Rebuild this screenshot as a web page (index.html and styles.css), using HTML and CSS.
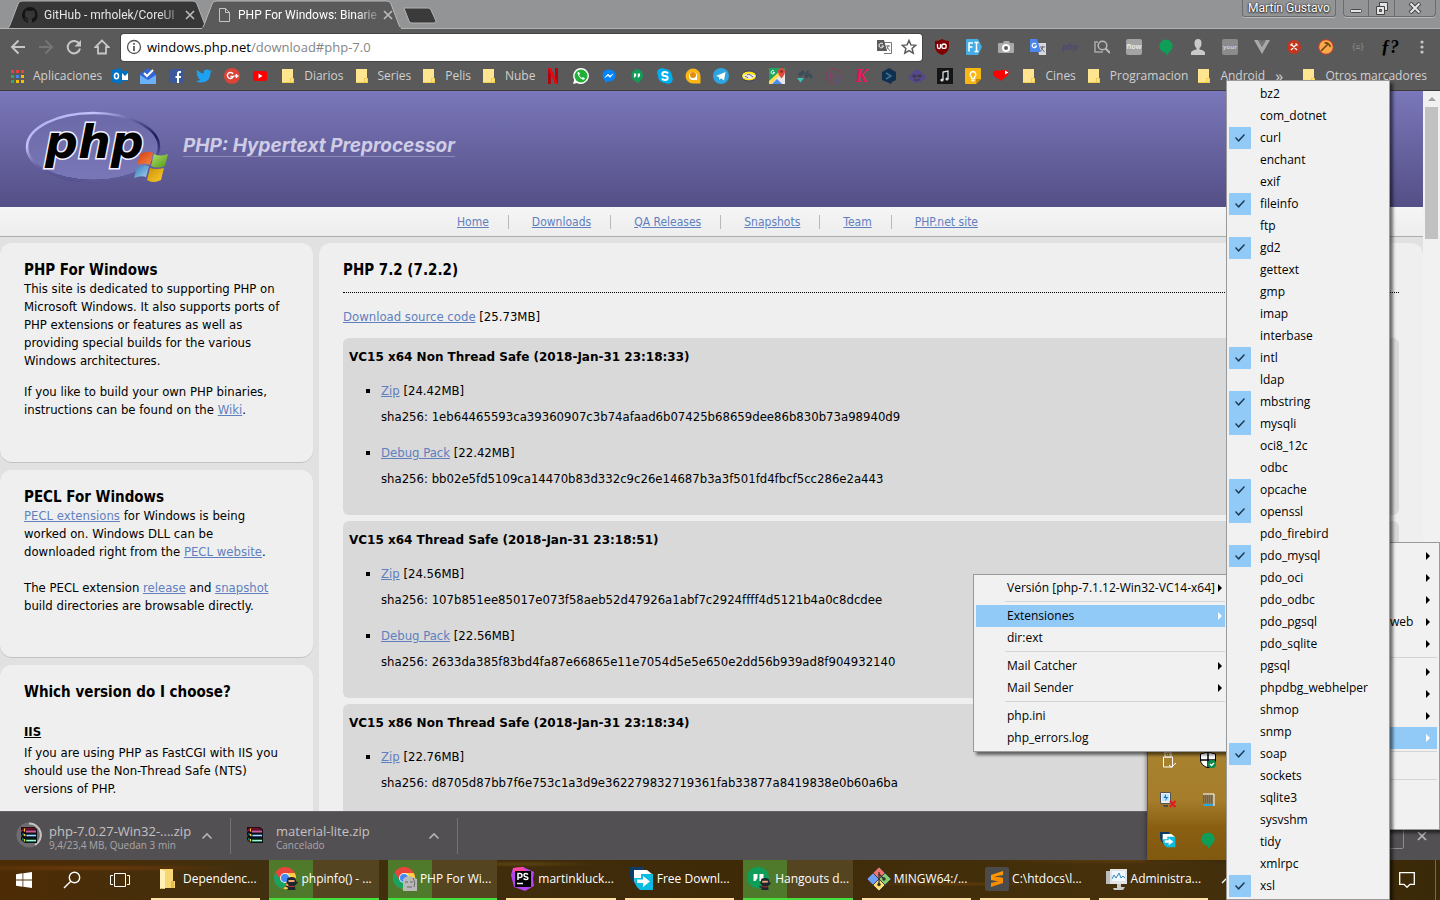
FILE: index.html
```html
<!DOCTYPE html>
<html lang="es">
<head>
<meta charset="utf-8">
<title>PHP For Windows: Binaries and sources Releases</title>
<link rel="stylesheet" href="styles.css">
</head>
<body>
<svg class="defs" aria-hidden="true">
  <symbol id="folder" viewBox="0 0 16 16"><path d="M2 1h11v9h1v5H2z" fill="#ffe58f"/><path d="M10 14v-4h4v5H2v-1z" fill="#f3cd4e"/><path d="M11 11h2v2.500h-2z" fill="#ffe58f"/></symbol>
  <symbol id="close" viewBox="0 0 10 10"><path d="M1 1l8 8M9 1L1 9" stroke="#b9b9b9" stroke-width="1.700" fill="none"/></symbol>
  <symbol id="chev" viewBox="0 0 12 8"><path d="M1.500 6.500L6 2l4.500 4.500" stroke="#b4b2b4" stroke-width="1.700" fill="none"/></symbol>
  <symbol id="rar" viewBox="0 0 16 16"><path d="M0 0h13l3 2.500V16H4l-4-3v-3l1-1-1-1V5l1-1-1-1z" fill="#101010"/><path d="M1 .700h11l3 2H4.500z" fill="#7a0b2c"/><path d="M1 1.500l3.500 2v1.800L1 3.800z" fill="#a01040"/><path d="M5 3.500h10v2H5z" fill="#d05a9c"/><path d="M1.500 6l3.500 1.500v2L1.500 8z" fill="#1b78d0"/><path d="M5.500 7.500H15v2H5.500z" fill="#2d8ce0"/><path d="M5.500 8h9.500v.8H5.500z" fill="#d7ecff"/><path d="M1 10.800l3.500 2v2L1 13z" fill="#0c7a50"/><path d="M5 12.500h10v2.300H5z" fill="#18a070"/><path d="M5.500 13h9.500v.8H5.500z" fill="#e3fff2"/><path d="M3.500 1.500v3M3.500 7v2M3.500 12v2.500" stroke="#f1d02e"/></symbol>
  <symbol id="chrome" viewBox="0 0 24 24"><circle cx="11" cy="11" r="11" fill="#e8453c"/><path d="M1.500 5.500A11 11 0 0 0 9.500 22L14 13 6.500 13z" fill="#1aa260"/><path d="M11 6h9.800A11 11 0 0 1 9.500 22l5-8z" fill="#ffcd40"/><circle cx="11" cy="11" r="5" fill="#f1f1f1"/><circle cx="11" cy="11" r="4" fill="#4587f4"/></symbol>
  <symbol id="ninja" viewBox="0 0 12 14"><path d="M2 1q4-2 8 0l1 5-2 2 1 5H2l1-5-2-2z" fill="#20242c"/><path d="M3 3h6v2H3z" fill="#f0a878"/><path d="M3 9h6v1H3z" fill="#b33"/><path d="M9 8l3-3M0 9l3 1" stroke="#20242c" stroke-width="1.500"/></symbol>
  <symbol id="fdm" viewBox="0 0 24 24"><path d="M0 0h14v22q-14-5-14-14z" fill="#0d3b66"/><path d="M4 3h13l5 4v12l-8 4Q4 19 4 12z" fill="#fff"/><path d="M4 11h7V7h12v16H10q-4-3-5-7z" fill="#0bbce0"/><path d="M7 12.500h6V9l7 5.500-7 5.500v-4H7z" fill="#fff"/></symbol>
  <symbol id="drop" viewBox="0 0 16 18"><circle cx="8" cy="8" r="7.500" fill="#0f9d58"/><path d="M8 13h5l-4 5H8z" fill="#0f9d58"/></symbol>
</svg>

<div class="browser">
  <header class="chrome">
    <div class="tabs">
      <div class="tab">
        <svg class="tab-shape" viewBox="0 0 202 29" preserveAspectRatio="none"><path d="M0 28.500Q2 28 3 25L11 4Q12 1 15 1h171q3 0 4 3l8 21q1 3 3 3.500z" fill="#373737" stroke="#b3b3b3" stroke-width="1"/></svg>
        <svg class="fav" viewBox="0 0 16 16"><path fill="#151515" d="M8 0a8 8 0 0 0-2.500 15.600c.4 0 .5-.2.5-.4v-1.500c-2.200.5-2.700-1-2.700-1-.4-.9-.9-1.200-.9-1.200-.7-.5.1-.5.1-.5.800.1 1.200.8 1.200.8.7 1.300 1.900.9 2.300.7.100-.5.300-.9.500-1.100-1.800-.2-3.600-.9-3.600-4 0-.9.300-1.600.8-2.100-.1-.2-.4-1 .1-2.100 0 0 .7-.2 2.200.8a7.500 7.500 0 0 1 4 0c1.500-1 2.200-.8 2.200-.8.400 1.100.2 1.900.1 2.100.5.6.8 1.300.8 2.100 0 3.100-1.900 3.700-3.700 3.900.3.300.6.8.6 1.500v2.200c0 .2.100.5.500.4A8 8 0 0 0 8 0"/></svg>
        <span class="tab-title">GitHub - mrholek/CoreUI</span>
        <button class="bare" aria-label="Cerrar"><svg width="10" height="10"><use href="#close"/></svg></button>
      </div>
      <div class="tab active">
        <svg class="tab-shape" viewBox="0 0 202 29" preserveAspectRatio="none"><path d="M0 29Q2 28 3 25L11 4Q12 1 15 1h171q3 0 4 3l8 21q1 3 3 4z" fill="#5a5a5a" stroke="#b9b9b9" stroke-width="1"/><path d="M1 28.500h199" stroke="#5a5a5a" stroke-width="2"/></svg>
        <svg class="fav" viewBox="0 0 16 16"><path d="M3.500 1.500h6l4 4v9h-10zM9.500 1.500v4h4" fill="none" stroke="#c4c4c4"/></svg>
        <span class="tab-title">PHP For Windows: Binarie</span>
        <button class="bare" aria-label="Cerrar"><svg width="10" height="10"><use href="#close"/></svg></button>
      </div>
      <button class="bare newtab" aria-label="Nueva pestaña"><svg width="34" height="17" viewBox="0 0 34 17"><path d="M1 1h24q2 0 3 2l5 11q0 2-2 2H9q-2 0-3-2z" fill="#3a3a3a" stroke="#b3b3b3"/></svg></button>
      <div class="win">
        <button class="win-user">Martín Gustavo</button>
        <div class="win-btns">
          <button aria-label="Minimizar"><svg width="14" height="12" viewBox="0 0 14 12"><rect x="1.500" y="7.500" width="11" height="3" rx="1" fill="#e3e3e3" stroke="#4a4a4a"/></svg></button>
          <button aria-label="Restaurar"><svg width="14" height="13" viewBox="0 0 14 13"><path d="M4.500.5h8v8h-8z" fill="#e3e3e3" stroke="#444"/><path d="M1.500 4.500h8v8h-8z" fill="#e3e3e3" stroke="#444"/><path d="M4.500 7.500h2v2h-2z" fill="#929496" stroke="#444"/></svg></button>
          <button aria-label="Cerrar"><svg width="14" height="12" viewBox="0 0 14 12"><path d="M2 1l10 10M12 1L2 11" stroke="#444" stroke-width="4"/><path d="M2.500 1.500l9 9M11.500 1.500l-9 9" stroke="#e9e9e9" stroke-width="2"/></svg></button>
        </div>
      </div>
    </div>

    <div class="toolbar">
      <div class="navbtns">
        <button class="bare" aria-label="Atrás"><svg width="16" height="16" viewBox="0 0 16 16"><path d="M15 8H2.500M8.500 1.500L2 8l6.500 6.500" fill="none" stroke="#c6c6c6" stroke-width="2"/></svg></button>
        <button class="bare" aria-label="Adelante"><svg width="16" height="16" viewBox="0 0 16 16"><path d="M1 8h12.500M7.500 1.500L14 8l-6.500 6.500" fill="none" stroke="#757575" stroke-width="2"/></svg></button>
        <button class="bare" aria-label="Recargar"><svg width="16" height="16" viewBox="0 0 16 16"><path d="M13.300 5A6.200 6.200 0 1 0 14 9.500" fill="none" stroke="#c6c6c6" stroke-width="2"/><path d="M15 1v6.500H8.500z" fill="#c6c6c6"/></svg></button>
        <button class="bare" aria-label="Inicio"><svg width="16" height="16" viewBox="0 0 16 16"><path d="M8 1.500L1.500 8H4v6.500h8V8h2.500z" fill="none" stroke="#c6c6c6" stroke-width="1.800"/></svg></button>
      </div>
      <div class="omnibox">
        <svg width="16" height="16" viewBox="0 0 16 16"><circle cx="8" cy="8" r="6.500" fill="none" stroke="#555" stroke-width="1.300"/><path d="M7.200 7h1.600v5H7.200zM7.200 4h1.600v1.700H7.200z" fill="#444"/></svg>
        <a class="url" href="#php-7.0">windows.php.net<span>/download#php-7.0</span></a>
        <svg width="16" height="16" viewBox="0 0 16 16"><path d="M6 3.500h9.500v11H8" fill="#fff" stroke="#777"/><path d="M1 1h7l3 11H1z" fill="#5b5b5b"/><path d="M7 5A2.300 2.300 0 1 0 7.500 7H5.500" stroke="#fff" fill="none"/><path d="M10 7h4M12 6v1q0 3-2 4M11 8l3 4" stroke="#777" fill="none"/></svg>
        <svg width="16" height="16" viewBox="0 0 16 16"><path d="M8 1.500l1.900 4.400 4.800.4-3.600 3.100 1.100 4.700L8 11.600l-4.200 2.500 1.100-4.700L1.300 6.300l4.800-.4z" fill="none" stroke="#5a5a5a" stroke-width="1.500"/></svg>
      </div>
      <div class="exts">
        <svg viewBox="0 0 16 16"><path d="M8 0q3 2 7 2v6q0 5-7 8-7-3-7-8V2q4 0 7-2" fill="#800000"/><path d="M3.500 5v3q0 1.500 1.500 1.500T6.500 8V5" stroke="#fff" stroke-width="1.300" fill="none"/><circle cx="10" cy="7.200" r="2.200" stroke="#fff" stroke-width="1.300" fill="none"/></svg>
        <svg viewBox="0 0 16 16"><path d="M1 0h11l4 8-4 8H1q-1 0-1-1V1q0-1 1-1" fill="#45aee6"/><path d="M3 12.500V4h4M3 8h3.500M8.500 3.500h4M10.500 3.500v9M8.500 12.500h4" stroke="#fff" stroke-width="1.500" fill="none"/></svg>
        <svg viewBox="0 0 16 16"><path d="M1 4h4l1-2h5l1 2h3q1 0 1 1v8q0 1-1 1H1q-1 0-1-1V5q0-1 1-1" fill="#a9a9a9"/><circle cx="8" cy="9" r="3" fill="#5a5a5a" stroke="#fff" stroke-width="2"/></svg>
        <svg viewBox="0 0 16 16"><path d="M7 4h9v12H9z" fill="#d8d8d8"/><path d="M0 0h7l4 13H1q-1 0-1-1z" fill="#4a86ee"/><path d="M6 5A2.200 2.200 0 1 0 6.500 7H4.500" stroke="#fff" stroke-width="1.200" fill="none"/><path d="M10 8h5M12.500 7v1q0 3-2 4M11 9l3.500 4" stroke="#667" fill="none"/></svg>
        <span class="x-php">php</span>
        <svg viewBox="0 0 16 16"><path d="M4 3H1v10h8" fill="none" stroke="#a9a9a9" stroke-width="1.500"/><circle cx="8.500" cy="6.500" r="4.300" fill="none" stroke="#b9b9b9" stroke-width="1.500"/><path d="M11.500 9.500L16 14" stroke="#b9b9b9" stroke-width="2"/></svg>
        <span class="x-tag">flow</span>
        <svg viewBox="0 0 16 18"><use href="#drop"/></svg>
        <svg viewBox="0 0 16 16"><path d="M4.500 4q0-4 3.500-4t3.500 4q0 4-2 5v1.500q5 1 5.500 3V16H1v-2.500q.5-2 5.500-3V9q-2-1-2-5" fill="#cacaca"/></svg>
        <span class="x-tag x-dim">your</span>
        <svg viewBox="0 0 16 16"><path d="M0 1h4l4 7 4-7h4L8 15z" fill="#a9a9a9"/><path d="M4 1h3l1 2 1-2h3L8 8z" fill="#777"/></svg>
        <svg viewBox="0 0 16 16"><circle cx="8" cy="8" r="7" fill="#c2361f"/><path d="M5 11l6-6M11 11L5 5M4.500 6.500l2-2M9.500 4.500l2 2" stroke="#fff" stroke-width="1.200"/></svg>
        <svg viewBox="0 0 16 16"><circle cx="8" cy="8" r="7.300" fill="#f9a94a" stroke="#c9352b"/><path d="M3 12l7-7M6.500 4q4-1 6 4" stroke="#704214" stroke-width="1.600" fill="none"/></svg>
        <span class="x-brace">{≡}</span>
        <span class="x-f">ƒ?</span>
        <button class="bare" aria-label="Menú"><svg viewBox="0 0 16 16"><circle cx="8" cy="3" r="1.600" fill="#c6c6c6"/><circle cx="8" cy="8" r="1.600" fill="#c6c6c6"/><circle cx="8" cy="13" r="1.600" fill="#c6c6c6"/></svg></button>
      </div>
    </div>

    <nav class="bookmarks">
      <a class="named" href="#"><svg viewBox="0 0 16 16"><path d="M2 2h3v3H2zM7 2h3v3H7z" fill="#ea4335"/><path d="M12 2h3v3h-3z" fill="#ea4335"/><path d="M2 7h3v3H2z" fill="#34a853"/><path d="M7 7h3v3H7z" fill="#4285f4"/><path d="M12 7h3v3h-3zM7 12h3v3H7zM12 12h3v3h-3z" fill="#fbbc05"/><path d="M2 12h3v3H2z" fill="#34a853"/></svg>Aplicaciones</a>
      <a href="#" aria-label="Outlook"><svg viewBox="0 0 16 16"><path d="M0 2l9-2v16l-9-2z" fill="#0072c6"/><path d="M9 3h7v10H9z" fill="#0072c6"/><path d="M10 5l3 3 3-3v7h-6z" fill="#fff"/><ellipse cx="4.500" cy="8" rx="2" ry="2.700" fill="none" stroke="#fff" stroke-width="1.600"/></svg></a>
      <a href="#" aria-label="Inbox"><svg viewBox="0 0 16 16"><path d="M0 6l8-6 8 6v9H0z" fill="#3367d6"/><path d="M0 7l8 5 8-5v9H0z" fill="#6ab1f7"/><path d="M4 5l3 3 6-6" stroke="#fff" stroke-width="2" fill="none"/></svg></a>
      <a href="#" aria-label="Facebook"><svg viewBox="0 0 16 16"><path d="M1 1h14v14H1z" fill="#3b5998"/><path d="M13 4h-1.500q-1.500 0-1.500 1.500V8M7.500 9H13M10 8v7" stroke="#fff" stroke-width="2" fill="none"/></svg></a>
      <a href="#" aria-label="Twitter"><svg viewBox="0 0 16 16"><path d="M16 3.500l-1.600 1.600Q14.500 14 5.500 14.500 2 14.500 0 13q3 0 4.500-1.500-2-.3-3-2.200h1.400Q.6 8.500.5 6l1.400.4Q-.2 4.500 1.200 2q3 3.300 6.700 3.500-.5-4 3-4 1.500 0 2.500 1l2-.8-1.300 1.900z" fill="#1da1f2"/></svg></a>
      <a href="#" aria-label="Google+"><svg viewBox="0 0 16 16"><circle cx="8" cy="8" r="8" fill="#db4437"/><path d="M9 6A3 3 0 1 0 9.200 8.500H6.500M10.500 8h4M12.500 6v4" stroke="#fff" stroke-width="1.400" fill="none"/></svg></a>
      <a href="#" aria-label="YouTube"><svg viewBox="0 0 16 16"><rect x="1" y="3" width="14" height="10" rx="2.500" fill="#f00"/><path d="M6.500 5.500v5l4-2.500z" fill="#fff"/></svg></a>
      <a class="named" href="#"><svg><use href="#folder"/></svg>Diarios</a>
      <a class="named" href="#"><svg><use href="#folder"/></svg>Series</a>
      <a class="named" href="#"><svg><use href="#folder"/></svg>Pelis</a>
      <a class="named" href="#"><svg><use href="#folder"/></svg>Nube</a>
      <a href="#" aria-label="Netflix"><svg viewBox="0 0 16 16"><path d="M3 0h3v16H3zM10 0h3v16h-3z" fill="#b1060f"/><path d="M3 0h3l7 16h-3z" fill="#e50914"/></svg></a>
      <a href="#" aria-label="WhatsApp"><svg viewBox="0 0 16 16"><path d="M8 0a8 8 0 1 1-4 15l-4 1 1.200-4A8 8 0 0 1 8 0" fill="#fff"/><circle cx="8" cy="8" r="6.500" fill="#20b038"/><path d="M5 4q-1 1 0 3 1.500 3 4.500 4.500 2 .5 2.500-1l-2-1.500-1 1Q7 9 6 7l1-1-1-2z" fill="#fff"/></svg></a>
      <a href="#" aria-label="Messenger"><svg viewBox="0 0 16 16"><path d="M8 1.500q6.500 0 6.500 6t-8 6L4 15v-2.500Q1.500 11 1.500 7.500q0-6 6.500-6" fill="#0084ff"/><path d="M4 9.500L7 6l2 2 3-2-3 3.500-2-2z" fill="#fff" stroke="#fff" stroke-width=".6"/></svg></a>
      <a href="#" aria-label="Hangouts"><svg viewBox="0 0 16 16"><path d="M8 1a6.500 6.500 0 0 1 6 7q-.5 4-6 8v-2.300A6.400 6.400 0 0 1 8 1" fill="#0f9d58"/><path d="M5 5.500h2.200v2.300L6 9.500H5zM8.800 5.500H11v2.300L9.800 9.500h-1z" fill="#fff"/></svg></a>
      <a href="#" aria-label="Skype"><svg viewBox="0 0 16 16"><circle cx="5" cy="5" r="4.800" fill="#00aff0"/><circle cx="11" cy="11" r="4.800" fill="#00aff0"/><circle cx="8" cy="8" r="7" fill="#00aff0"/><path d="M11 5.500Q10 4 8 4 5.300 4 5.300 6T8 8t2.700 2T8 12Q6 12 5 10.500" stroke="#fff" stroke-width="2" fill="none"/></svg></a>
      <a href="#" aria-label="Allo"><svg viewBox="0 0 16 16"><path d="M8 .5A7.500 7.500 0 1 0 8 15.500h7.500V8A7.500 7.500 0 0 0 8 .5" fill="#fbb515"/><path d="M8 4a4 4 0 1 0 0 8h4V8a4 4 0 0 0-4-4" fill="#fff"/><circle cx="8" cy="7" r="3" fill="#e58c0b"/></svg></a>
      <a href="#" aria-label="Telegram"><svg viewBox="0 0 16 16"><circle cx="8" cy="8" r="8" fill="#2ca5e0"/><path d="M3 8l9.500-4L11 12.500 8 10.300 6.500 12 6 9z" fill="#fff"/></svg></a>
      <a href="#" aria-label="Mercado Libre"><svg viewBox="0 0 16 16"><ellipse cx="8" cy="8" rx="7.500" ry="5" fill="#ffe600" stroke="#36357a"/><path d="M1.500 7q3 0 6.500-2 3 2 6.500 2-1 4-6.500 4T1.500 7" fill="#e9e9e9"/><path d="M6 7l2-1 4 3M4 8l3 2" stroke="#666" fill="none"/></svg></a>
      <a href="#" aria-label="Maps"><svg viewBox="0 0 16 16"><path d="M0 0h16v16H0z" fill="#1da462"/><path d="M0 16L16 2v14z" fill="#e8e8e8"/><path d="M3 16l5-5 5 5z" fill="#4c8bf5"/><path d="M0 13L11 3l2 2L2 16H0z" fill="#ffde48"/><path d="M12.500 0a3.500 3.500 0 0 1 3.500 3.500q0 3-3.500 7-3.500-4-3.500-7A3.500 3.500 0 0 1 12.500 0" fill="#dd4b3e"/><circle cx="12.500" cy="3.500" r="1.300" fill="#822"/><path d="M5 3A1.700 1.700 0 1 0 5.500 4.500H4" stroke="#fff" fill="none"/></svg></a>
      <a href="#" aria-label="HN"><svg viewBox="0 0 16 16"><path d="M1 6l5-4 2 3-5 4zM7 8l3-6 2 1-1 3 2-1 3 4-2 2-2-3-3 3z" fill="#3b4b58"/><path d="M0 10h7l-3.500 4.500z" fill="#35c4b5"/></svg></a>
      <a href="#" aria-label="Player"><svg viewBox="0 0 16 16"><circle cx="8" cy="8" r="7.300" fill="none" stroke="#923859"/><path d="M5.500 5v6l5.500-3z" fill="none" stroke="#84406f"/><path d="M8 15.300A7.300 7.300 0 0 0 15.300 8" stroke="#5b50a0" fill="none"/></svg></a>
      <a href="#" class="b-k">K</a>
      <a href="#" aria-label="Cubo"><svg viewBox="0 0 16 16"><path d="M8 0l7 4v8l-4 2-1 2-2-1-7-3V4z" fill="#11304f"/><path d="M5 5l5 3-5 3" fill="none" stroke="#3b7190" stroke-width="1.500"/></svg></a>
      <a href="#" aria-label="Robot"><svg viewBox="0 0 16 16"><circle cx="8" cy="8.500" r="6.500" fill="#57478c"/><path d="M0 7h2v5H0zM14 7h2v5h-2z" fill="#57478c"/><path d="M4 7h3v2H4zM9 7h3v2H9zM5 11.500q3 2 6 0" fill="#3d3d4a" stroke="#3d3d4a"/></svg></a>
      <a href="#" aria-label="Música"><svg viewBox="0 0 16 16"><path d="M0 0h16v16H0z" fill="#151515"/><path d="M6 12V4l5-1v8" fill="none" stroke="#d4dde4" stroke-width="1.300"/><circle cx="5" cy="12" r="1.600" fill="#d4dde4"/><circle cx="10" cy="11" r="1.600" fill="#d4dde4"/></svg></a>
      <a href="#" aria-label="Keep"><svg viewBox="0 0 16 16"><path d="M1 0h14q1 0 1 1v10l-5 5H1q-1 0-1-1V1q0-1 1-1" fill="#f9b713"/><path d="M11 16v-5h5z" fill="#c98a00"/><path d="M8 3.500a3 3 0 0 1 1.500 5.500v1.500h-3V9A3 3 0 0 1 8 3.500zM6.500 12.500h3" fill="none" stroke="#fff" stroke-width="1.300"/></svg></a>
      <a href="#" aria-label="Favoritos"><svg viewBox="0 0 16 16"><path d="M0 4q4-3 7-1 5-3 9 1-1 4-3 5-3 1-5 4-3-3-6-4-2-2-2-5" fill="#f00"/><path d="M12 2.500v4l3.500-2z" fill="#fff"/></svg></a>
      <a class="named" href="#"><svg><use href="#folder"/></svg>Cines</a>
      <a class="named long" href="#"><svg><use href="#folder"/></svg>Programacion</a>
      <a class="named" href="#"><svg><use href="#folder"/></svg>Android</a>
      <span class="more">»</span>
      <a href="#" class="others"><svg><use href="#folder"/></svg>Otros marcadores</a>
    </nav>
  </header>

  <div class="viewport">
    <div class="site">
      <div class="site-head">
        <svg class="logo" viewBox="0 0 144 76" width="144" height="76">
          <defs>
            <linearGradient id="ring" x1="0" y1="0" x2="1" y2="1"><stop offset="0" stop-color="#a5a3e4"/><stop offset=".25" stop-color="#c5c3fb"/><stop offset=".42" stop-color="#6f6cb0"/><stop offset=".66" stop-color="#1c1a5c"/><stop offset=".85" stop-color="#5b579a"/><stop offset="1" stop-color="#6b67aa"/></linearGradient>
            <linearGradient id="ring-fade" x1="0" y1="0" x2="0" y2="1"><stop offset=".5" stop-color="#6f6cae" stop-opacity="0"/><stop offset="1" stop-color="#5d5997"/></linearGradient>
            <linearGradient id="disc" x1="0" y1="0" x2="0" y2="1"><stop offset="0" stop-color="#6c69a8"/><stop offset="1" stop-color="#7a77b8"/></linearGradient>
            <linearGradient id="fr" x1="0" y1="0" x2="1" y2="1"><stop offset="0" stop-color="#d23a12"/><stop offset="1" stop-color="#f58a42"/></linearGradient>
            <linearGradient id="fg" x1="0" y1="0" x2="1" y2="1"><stop offset="0" stop-color="#b5de6a"/><stop offset="1" stop-color="#4f9a14"/></linearGradient>
            <linearGradient id="fb" x1="0" y1="0" x2="1" y2="1"><stop offset="0" stop-color="#2f78b8"/><stop offset="1" stop-color="#a6d2f0"/></linearGradient>
            <linearGradient id="fy" x1="0" y1="0" x2="1" y2="1"><stop offset="0" stop-color="#c89008"/><stop offset="1" stop-color="#ffce2a"/></linearGradient>
          </defs>
          <ellipse cx="68" cy="36" rx="66" ry="34" fill="url(#disc)" stroke="url(#ring)" stroke-width="2.500"/>
          <ellipse cx="68" cy="36" rx="66" ry="34" fill="none" stroke="url(#ring-fade)" stroke-width="2.500"/>
          <text class="logo-text" x="20" y="47">php</text>
          <path d="M115 43q8-4 13-1l-3 12q-6-3-13 0z" fill="url(#fr)"/><path d="M129 43q6 3 14 0l-3 12q-8 3-14 0z" fill="url(#fg)"/><path d="M112 56q7-3 12-1l-3 11q-5-2-12 1z" fill="url(#fb)"/><path d="M125 57q6 2 14 0l-3 12q-8 4-14 0z" fill="url(#fy)"/>
        </svg>
        <a class="site-title" href="#">PHP: Hypertext Preprocessor</a>
      </div>
      <nav class="site-nav">
        <a href="#">Home</a><a href="#">Downloads</a><a href="#">QA Releases</a><a href="#">Snapshots</a><a href="#">Team</a><a href="#">PHP.net site</a>
      </nav>
      <div class="cols">
        <aside>
          <section class="card">
            <h2>PHP For Windows</h2>
            <p>This site is dedicated to supporting PHP on<br>Microsoft Windows. It also supports ports of<br>PHP extensions or features as well as<br>providing special builds for the various<br>Windows architectures.</p>
            <p>If you like to build your own PHP binaries,<br>instructions can be found on the <a href="#">Wiki</a>.</p>
          </section>
          <section class="card">
            <h2>PECL For Windows</h2>
            <p><a href="#">PECL extensions</a> for Windows is being<br>worked on. Windows DLL can be<br>downloaded right from the <a href="#">PECL website</a>.</p>
            <p class="far">The PECL extension <a href="#">release</a> and <a href="#">snapshot</a><br>build directories are browsable directly.</p>
          </section>
          <section class="card">
            <h2>Which version do I choose?</h2>
            <h3>IIS</h3>
            <p>If you are using PHP as FastCGI with IIS you<br>should use the Non-Thread Safe (NTS)<br>versions of PHP.</p>
          </section>
        </aside>
        <main class="card">
          <h2>PHP 7.2 (7.2.2)</h2>
          <p class="source"><a href="#">Download source code</a> [25.73MB]</p>
          <section class="build">
            <h4>VC15 x64 Non Thread Safe (2018-Jan-31 23:18:33)</h4>
            <ul>
              <li><a href="#">Zip</a> [24.42MB]<span>sha256: 1eb64465593ca39360907c3b74afaad6b07425b68659dee86b830b73a98940d9</span></li>
              <li><a href="#">Debug Pack</a> [22.42MB]<span>sha256: bb02e5fd5109ca14470b83d332c9c26e14687b3a3f501fd4fbcf5cc286e2a443</span></li>
            </ul>
          </section>
          <section class="build">
            <h4>VC15 x64 Thread Safe (2018-Jan-31 23:18:51)</h4>
            <ul>
              <li><a href="#">Zip</a> [24.56MB]<span>sha256: 107b851ee85017e073f58aeb52d47926a1abf7c2924ffff4d5121b4a0c8dcdee</span></li>
              <li><a href="#">Debug Pack</a> [22.56MB]<span>sha256: 2633da385f83bd4fa87e66865e11e7054d5e5e650e2dd56b939ad8f904932140</span></li>
            </ul>
          </section>
          <section class="build">
            <h4>VC15 x86 Non Thread Safe (2018-Jan-31 23:18:34)</h4>
            <ul>
              <li><a href="#">Zip</a> [22.76MB]<span>sha256: d8705d87bb7f6e753c1a3d9e362279832719361fab33877a8419838e0b60a6ba</span></li>
            </ul>
          </section>
        </main>
      </div>
    </div>
    <div class="scroll"><i class="scroll-up"></i><i class="thumb"></i></div>
  </div>

  <footer class="shelf">
    <div class="dl">
      <div class="dl-icon"><svg class="dl-ring" viewBox="0 0 26 26"><circle cx="13" cy="13" r="12.500" fill="#6f6c6f"/><path d="M13 1.500A11.500 11.500 0 0 1 19 23" fill="none" stroke="#c4c2c4" stroke-width="2"/></svg><svg class="rar"><use href="#rar"/></svg></div>
      <div class="dl-text"><b>php-7.0.27-Win32-....zip</b><small>9,4/23,4 MB, Quedan 3 min</small></div>
      <button class="bare" aria-label="Opciones"><svg width="12" height="8"><use href="#chev"/></svg></button>
    </div>
    <div class="dl">
      <div class="dl-icon"><svg class="rar"><use href="#rar"/></svg></div>
      <div class="dl-text"><b>material-lite.zip</b><small>Cancelado</small></div>
      <button class="bare" aria-label="Opciones"><svg width="12" height="8"><use href="#chev"/></svg></button>
    </div>
    <div class="shelf-end"><button class="show-all" aria-label="Mostrar todo"></button><button class="bare" aria-label="Cerrar"><svg width="10" height="10"><use href="#close"/></svg></button></div>
  </footer>
</div>

<div class="taskbar">
  <button class="sys" aria-label="Inicio"><svg width="16" height="16" viewBox="0 0 16 16"><path d="M0 2.300l6.500-1v6.300H0zM7.300 1.200L16 0v7.600H7.300zM0 8.400h6.500v6.300l-6.500-1zM7.300 8.400H16V16l-8.700-1.200z" fill="#fff"/></svg></button>
  <button class="sys" aria-label="Buscar"><svg width="18" height="18" viewBox="0 0 18 18"><circle cx="11.500" cy="6.500" r="5.200" fill="none" stroke="#fff" stroke-width="1.400"/><path d="M7.800 10.200L1 17" stroke="#fff" stroke-width="1.400"/></svg></button>
  <button class="sys" aria-label="Vista de tareas"><svg width="20" height="16" viewBox="0 0 20 16"><path d="M4.500 1.500h11v13h-11zM3 3.500H.5v9H3M17 3.500h2.500v9H17" fill="none" stroke="#fff"/></svg></button>
  <div class="apps">
    <button><svg viewBox="0 0 24 24"><path d="M4 2h13v12l2 0v7H9L4 22z" fill="#f7d774"/><path d="M4 2l5 2v18l-5-1z" fill="#fff0b8"/><path d="M15 14h3v7h-3z" fill="#e8bd4b"/></svg>Dependenc...</button>
    <button class="green"><svg viewBox="0 0 24 24"><use href="#chrome"/><use href="#ninja" x="11" y="10" width="13" height="14"/></svg>phpinfo() - ...</button>
    <button class="green"><svg viewBox="0 0 24 24"><use href="#chrome"/><path d="M10 12q4-4 9-2l5 2v12H10z" fill="#b9b9b9"/><path d="M12 15h3M17 15h3M14 20h5M20 11q3 4 1 9" stroke="#666" fill="none"/></svg>PHP For Wi...</button>
    <button><svg viewBox="0 0 24 24"><path d="M2 1l10-1 11 5-1 7 1 7-9 5L3 20 0 8z" fill="#b345f1"/><path d="M2 1l10-1 4 5H2z" fill="#ff45a0"/><path d="M4 4h16v16H4z" fill="#000"/><path d="M6 16.500h6" stroke="#fff" stroke-width="1.500"/><path d="M7 13V6.500h2q2 0 2 2t-2 2H7M17 7.500q-1-1-2.500-1-1.500 0-1.500 1.500t2 1.700q2 .3 2 1.500T15 12.500q-1.500 0-2.500-1" fill="none" stroke="#fff" stroke-width="1.500"/></svg>martinkluck...</button>
    <button><svg viewBox="0 0 24 24"><use href="#fdm"/></svg>Free Downl...</button>
    <button class="green"><svg viewBox="0 0 24 24"><path d="M10.500 0a10.500 10.500 0 0 1 0 21l-2 2v-2A10.500 10.500 0 0 1 10.500 0" fill="#0f9d58"/><path d="M5.500 7h4v4l-2 3h-2zM11.500 7h4v4l-2 3h-2z" fill="#fff"/><use href="#ninja" x="11" y="11" width="12" height="13"/></svg>Hangouts d...</button>
    <button><svg viewBox="0 0 24 24"><g stroke-width="1" stroke="#444"><path d="M12 0l6 6-6 6-6-6z" fill="#f2736b"/><path d="M18 6l6 6-6 6-6-6z" fill="#86d06f"/><path d="M6 6l6 6-6 6-6-6z" fill="#6f9ff2"/><path d="M12 12l6 6-6 6-6-6z" fill="#ffe06e"/></g><path d="M12 5v13M12 7l5 5" stroke="#333" stroke-width="1.300"/><circle cx="12" cy="17.500" r="1.700" fill="#333"/><circle cx="17" cy="12" r="1.700" fill="#333"/></svg>MINGW64:/...</button>
    <button><svg viewBox="0 0 24 24"><rect width="24" height="24" rx="2" fill="#4b4b4b"/><path d="M18 4L6 8v5l12 2V11L9 9.500 18 8z" fill="#ff9800"/><path d="M6 20l12-4v-5L9 9.500v3l5 1.500-8 2z" fill="#f78c00"/></svg>C:\htdocs\l...</button>
    <button><svg viewBox="0 0 24 24"><path d="M2 4h14v13H2z" fill="#bcbcbc"/><path d="M6 2h17v15H6z" fill="#e4e4e4"/><path d="M8 4h13v10H8z" fill="#eef7fd"/><path d="M8 12l2-4 2 3 3-5 2 5 2-2 2 2" stroke="#2f86c6" fill="none"/><path d="M13 17h4v3h4l-2 3h-9l-1-2h4z" fill="#cacaca"/></svg>Administra...</button>
  </div>
  <button class="bare tray-chev" aria-label="Iconos ocultos"><svg width="12" height="8" viewBox="0 0 12 8"><path d="M1 7l5-5 5 5" fill="none" stroke="#fff" stroke-width="1.300"/></svg></button>
  <button class="bare notif" aria-label="Notificaciones"><svg width="16" height="16" viewBox="0 0 16 16"><path d="M.7.700h14.600v11.600H11l-3 3-3-3H.7z" fill="none" stroke="#fff" stroke-width="1.300"/></svg></button>
</div>

<div class="tray">
  <svg viewBox="0 0 16 16"><path d="M5 0h6v5H5zM3.500 5h9v10h-9z" fill="none" stroke="#fff"/><path d="M7 2h.8v1H7zM9 2h.8v1H9z" fill="#fff"/><path d="M9 13l2.500 2L16 11" stroke="#fff" fill="none"/></svg>
  <svg viewBox="0 0 16 16"><path d="M8 0l7.500 2v6q0 5-7.500 8Q.5 13 .5 8V2z" fill="#fff" stroke="#000"/><path d="M8 0v16M0 8h16" stroke="#000" stroke-width="1.500"/><circle cx="12" cy="12" r="4.300" fill="#0e8a4a"/><path d="M10 12l1.500 1.500L14 11" stroke="#fff" fill="none" stroke-width="1.300"/></svg>
  <svg viewBox="0 0 16 16"><path d="M.5.500h10v11H.5z" fill="#ededed" stroke="#555"/><path d="M2 2h7v7H2z" fill="#bfe4f7"/><path d="M6 2L3.500 6H6L5 9l3.500-4H6z" fill="#1479c4"/><path d="M3 13h5v2H4z" fill="#4c4c4c"/><path d="M10 9l5.500 6M15.500 9L10 15" stroke="#e01b24" stroke-width="2.200"/></svg>
  <svg viewBox="0 0 16 16"><path d="M3 2h10v12H3z" fill="#8c7855"/><path d="M3 2h11v12" fill="none" stroke="#fff"/><path d="M3 12h10v2H3z" fill="#27a8e0"/><path d="M3 4h9M3 6h9M3 8h9M3 10h9" stroke="#5e4a28" stroke-dasharray="1 1"/></svg>
  <svg><use href="#fdm"/></svg>
  <svg viewBox="0 0 16 18"><use href="#drop"/></svg>
</div>

<div class="menu menu-root">
  <button class="sub" aria-label="Menú 1"></button><button class="sub" aria-label="Menú 2"></button><button class="sub" aria-label="Menú 3"></button><button class="sub">web</button><button class="sub" aria-label="Menú 5"></button>
  <hr>
  <button class="sub" aria-label="Menú 6"></button><button class="sub" aria-label="Menú 7"></button><button class="sub" aria-label="Menú 8"></button><button class="sub on" aria-label="PHP"></button>
  <hr>
  <button aria-label="Menú 10"></button>
  <hr>
  <button aria-label="Menú 11"></button><button aria-label="Menú 12"></button>
</div>

<div class="menu menu-php">
  <button class="sub">Versión [php-7.1.12-Win32-VC14-x64]</button>
  <hr>
  <button class="sub on">Extensiones</button>
  <button>dir:ext</button>
  <hr>
  <button class="sub">Mail Catcher</button>
  <button class="sub">Mail Sender</button>
  <hr>
  <button>php.ini</button>
  <button>php_errors.log</button>
</div>

<div class="menu menu-ext">
  <label><input type="checkbox">bz2</label>
  <label><input type="checkbox">com_dotnet</label>
  <label><input type="checkbox" checked>curl</label>
  <label><input type="checkbox">enchant</label>
  <label><input type="checkbox">exif</label>
  <label><input type="checkbox" checked>fileinfo</label>
  <label><input type="checkbox">ftp</label>
  <label><input type="checkbox" checked>gd2</label>
  <label><input type="checkbox">gettext</label>
  <label><input type="checkbox">gmp</label>
  <label><input type="checkbox">imap</label>
  <label><input type="checkbox">interbase</label>
  <label><input type="checkbox" checked>intl</label>
  <label><input type="checkbox">ldap</label>
  <label><input type="checkbox" checked>mbstring</label>
  <label><input type="checkbox" checked>mysqli</label>
  <label><input type="checkbox">oci8_12c</label>
  <label><input type="checkbox">odbc</label>
  <label><input type="checkbox" checked>opcache</label>
  <label><input type="checkbox" checked>openssl</label>
  <label><input type="checkbox">pdo_firebird</label>
  <label><input type="checkbox" checked>pdo_mysql</label>
  <label><input type="checkbox">pdo_oci</label>
  <label><input type="checkbox">pdo_odbc</label>
  <label><input type="checkbox">pdo_pgsql</label>
  <label><input type="checkbox">pdo_sqlite</label>
  <label><input type="checkbox">pgsql</label>
  <label><input type="checkbox">phpdbg_webhelper</label>
  <label><input type="checkbox">shmop</label>
  <label><input type="checkbox">snmp</label>
  <label><input type="checkbox" checked>soap</label>
  <label><input type="checkbox">sockets</label>
  <label><input type="checkbox">sqlite3</label>
  <label><input type="checkbox">sysvshm</label>
  <label><input type="checkbox">tidy</label>
  <label><input type="checkbox">xmlrpc</label>
  <label><input type="checkbox" checked>xsl</label>
</div>
</body>
</html>
```
FILE: styles.css
```css
* { box-sizing: border-box; }
body {
  margin: 0;
  height: 100vh;
  display: flex;
  flex-direction: column;
  position: relative;
  overflow: hidden;
  font: 12px/18px "Open Sans", "Noto Sans", sans-serif;
  color: #000;
}
h2, h3, h4, p, ul { margin: 0; padding: 0; }
a { color: inherit; text-decoration: none; }
button { font: inherit; color: inherit; cursor: default; }
svg { display: block; flex: none; }
.defs { position: absolute; width: 0; height: 0; }
.bare { border: 0; padding: 0; background: none; display: block; }

.browser { flex: 1; min-height: 0; display: flex; flex-direction: column; }
.chrome { background: #5a5a5a; border-bottom: 1px solid #3c3c3c; flex: none; }

/* tab strip */
.tabs { height: 29px; background: #929496; border-bottom: 1px solid #b3b3b3; display: flex; padding-left: 7px; font-family: Roboto, sans-serif; }
.tab { position: relative; width: 202px; height: 29px; display: flex; align-items: center; padding: 1px 14px 0 15px; gap: 6px; color: #e6e6e6; }
.tab.active { margin-left: -8px; color: #fff; }
.tab > * { position: relative; }
.tab .tab-shape { position: absolute; left: 0; top: 0; width: 100%; height: 29px; }
.fav { width: 16px; height: 16px; }
.tab-title { flex: 1; white-space: nowrap; -webkit-mask-image: linear-gradient(90deg, #000 85%, rgba(0,0,0,.25)); mask-image: linear-gradient(90deg, #000 85%, rgba(0,0,0,.25)); }
.newtab { align-self: flex-start; margin-top: 7px; }
.win { margin-left: auto; display: flex; gap: 7px; padding-right: 4px; color: #fff; }
.win button { background: none; border: 1px solid #6a6c6e; border-top: 0; height: 17px; padding: 0; display: flex; align-items: center; justify-content: center; }
.win .win-user { width: 94px; border-radius: 0 0 3px 3px; line-height: 16px; text-shadow: 0 0 2px #000, 0 1px 2px #333; box-shadow: 0 1px 0 #b9b9b9; }
.win-btns { display: flex; }
.win-btns button { width: 26px; border-radius: 0 0 0 4px; box-shadow: 0 1px 0 #b9b9b9; }
.win-btns button + button { border-left: 0; border-radius: 0; }
.win-btns button:last-child { width: 41px; border-radius: 0 0 4px 0; }

/* address row */
.toolbar { display: flex; align-items: center; height: 36px; padding-right: 10px; }
.navbtns { display: flex; gap: 12px; padding: 0 11px 0 10px; }
.omnibox { flex: 1; height: 27px; background: #fff; border-radius: 3px; box-shadow: 0 0 0 1px #444; display: flex; align-items: center; gap: 9px; padding: 0 5px; }
.url { flex: 1; font-size: 13px; margin-left: -4px; }
.url span { color: #858585; }
.exts { display: flex; align-items: center; gap: 16px; padding-left: 12px; }
.exts > * { width: 16px; height: 16px; flex: none; display: flex; align-items: center; justify-content: center; line-height: 16px; }
.exts svg { width: 16px; height: 16px; }
.exts .x-php { font: italic bold 9px/16px "Open Sans", sans-serif; color: #4a4c70; }
.exts .x-tag { background: #a3a3a3; color: #e8e8e8; border-radius: 2px; font-size: 7px; font-weight: 700; }
.exts .x-dim { background: #8b8b8b; color: #cfcfcf; font-size: 6px; }
.exts .x-brace { color: #8d8d8d; font-size: 9px; }
.exts .x-f { color: #000; font: italic bold 18px/16px "Liberation Serif", serif; }

/* bookmarks */
.bookmarks { display: flex; align-items: center; height: 25px; padding: 0 13px 4px 9px; color: #d0d0d0; gap: 12px; white-space: nowrap; }
.bookmarks a { display: flex; align-items: center; gap: 8px; flex: none; }
.bookmarks .named { margin-right: -2px; }
.bookmarks .long { margin-right: -4px; }
.bookmarks svg { width: 16px; height: 16px; }
.bookmarks .b-k { width: 16px; justify-content: center; font: italic bold 19px/16px "Liberation Serif", serif; color: #e9155b; }
.more { font-size: 16px; line-height: 16px; }
.others { margin-left: auto; }

/* page */
.viewport { flex: 1; min-height: 0; display: flex; background: #e1e1e1; }
.site { flex: 1; min-width: 0; overflow: hidden; font: 13px/18px "DejaVu Sans Condensed", "DejaVu Sans", sans-serif; }
.site-head { height: 116px; background: linear-gradient(#7a77ba, #544f86); display: flex; align-items: center; gap: 14px; padding-left: 25px; }
.logo-text { font: italic bold 46px "DejaVu Sans", sans-serif; fill: #000; stroke: #f1f1ff; stroke-width: 3px; paint-order: stroke; }
.site-title { font: italic bold 19px/20px Inter, sans-serif; border-bottom: 1px solid #8e8bb8; margin-bottom: 6px; white-space: nowrap; }
.site-nav { height: 30px; background: linear-gradient(#f5f5f5, #ededed); border-bottom: 1px solid #aaafaa; display: flex; justify-content: center; align-items: center; padding-left: 8px; font-size: 12px; }
.site-nav a { padding: 0 19px 0 23px; line-height: 14px; border-right: 1px solid #b9b9b9; }
.site-nav a:last-child { border: 0; }
.site a { color: #5f7fbf; text-decoration: underline; }
.site .site-title { color: #cfcde6; text-decoration: none; }
.cols { display: flex; gap: 6px; padding-top: 6px; align-items: flex-start; white-space: nowrap; }
aside { width: 313px; flex: none; display: grid; gap: 7px; }
.card { background: #efefef; border-radius: 12px; padding: 17px 24px 43px; box-shadow: inset 0 -1px 0 #c3c3c3; }
aside .card:first-child { padding-bottom: 44px; }
.card h2 { font-size: 15px; line-height: 20px; }
.card p + p { margin-top: 13px; }
.card p + .far { margin-top: 18px; }
.card h3 { font-size: 13px; line-height: 20px; text-decoration: underline; margin: 20px 0 2px; }
main.card { flex: 1; min-width: 0; }
main h2 { padding-bottom: 12px; border-bottom: 1px dotted #000; }
.source { margin: 15px 0 12px; }
.build { background: #d9d9d9; border-radius: 6px; padding: 9px 6px 27px; margin-bottom: 6px; }
.build h4 { font: bold 12px/20px "DejaVu Sans", sans-serif; margin-bottom: 15px; }
.build ul { list-style: square; padding-left: 32px; display: grid; gap: 18px; }
.build span { display: block; margin-top: 8px; }

.scroll { width: 17px; background: #f1f1f1; padding: 6px 2px; display: flex; flex-direction: column; align-items: center; gap: 6px; }
.scroll-up { border: 4px solid transparent; border-top: 0; border-bottom-color: #a3a3a3; height: 4px; }
.thumb { width: 13px; height: 132px; background: #c1c1c1; }

/* downloads */
.shelf { flex: none; height: 49px; background: #535053; border-top: 1px solid #656265; display: flex; align-items: center; color: #c3c1c3; }
.dl { width: 231px; height: 36px; display: flex; align-items: center; border-right: 1px solid #757275; padding: 0 17px 0 49px; position: relative; white-space: nowrap; }
.dl + .dl { padding-left: 45px; width: 227px; }
.dl-icon { position: absolute; left: 16px; top: 4px; width: 26px; height: 26px; display: grid; place-items: center; }
.dl-icon svg { grid-area: 1 / 1; }
.rar { width: 16px; height: 16px; }
.dl-ring { width: 26px; height: 26px; }
.dl + .dl .dl-icon { left: 11px; }
.dl-text { flex: 1; padding-top: 3px; }
.dl-text b { display: block; font-weight: 400; font-size: 13px; line-height: 15px; }
.dl-text small { display: block; font-size: 10px; line-height: 12px; color: #a9a7a9; }
.shelf-end { margin-left: auto; display: flex; align-items: center; gap: 13px; padding-right: 13px; }
.show-all { width: 90px; height: 26px; background: none; border: 1px solid #8d8b8d; border-radius: 2px; }

/* taskbar */
.taskbar { flex: none; height: 40px; display: flex; color: #fff; background: radial-gradient(ellipse at 6% 20%, #6b3a0c, transparent 8%), radial-gradient(ellipse at 36% 10%, #5c4310, transparent 6%), radial-gradient(ellipse at 66% 60%, #5e3c0c, transparent 7%), radial-gradient(ellipse at 78% 0%, #5a3b0e, transparent 8%), linear-gradient(90deg, #4d2c05, #41300f 18%, #3f2a08 50%, #46310c 80%, #3a2908); }
.sys { width: 48px; border: 0; background: none; padding: 0; display: grid; place-items: center; }
.apps { display: grid; grid-template-columns: repeat(9, 1fr); gap: 9px; padding-left: 7px; width: 1064px; flex: none; }
.apps button { min-width: 0; border: 0; border-bottom: 2px solid #ffe0a6; background: none; padding: 0 0 0 5px; display: flex; align-items: center; gap: 3px; white-space: nowrap; }
.apps svg { width: 24px; height: 24px; }
.apps .green { border-color: #45e03a; background: linear-gradient(90deg, #4f7a2b 44px, #54441f 44px); }
.tray-chev { margin-left: 13px; }
.notif { margin-left: auto; padding: 0 20px 0 12px; border-right: 1px solid #7a6a48; margin-right: 4px; }

.tray { position: absolute; right: 130px; bottom: 40px; width: 163px; height: 150px; background: linear-gradient(#a8822f 30%, #a57d2b 60%, #8a5f12 78%, #80590f); border-left: 1px solid #6e5a2a; box-shadow: -1px 0 4px rgba(0,0,0,.4); display: grid; grid-template-columns: 16px 16px; gap: 24px; align-content: end; padding: 0 0 12px 12px; }
.tray svg { width: 16px; height: 16px; }

/* popup menus */
.menu { position: absolute; background: #f1f1f1; border: 1px solid #9a9a9a; padding: 2px; box-shadow: 3px 3px 3px rgba(0,0,0,.55); }
.menu button { width: 100%; height: 22px; border: 0; background: none; padding: 0 0 0 31px; text-align: left; display: flex; align-items: center; white-space: nowrap; line-height: 22px; }
.menu .sub::after { content: ""; margin-left: auto; margin-right: 3px; border: 4px solid transparent; border-left-color: #000; border-right: 0; }
.menu .on { background: #91c9f7; }
.menu .on::after { border-left-color: #fff; }
.menu hr { height: 1px; margin: 2px 0 3px 29px; border: 0; border-top: 1px solid #d4d4d4; }
.menu-root { right: 0; bottom: 70px; width: 214px; }
.menu .sub:empty, .menu-root button { padding-left: 161px; }
.menu-root .sub::after { margin-right: 7px; }
.menu-php { right: 212px; bottom: 148px; width: 255px; }
.menu-ext { right: 50px; bottom: 0; width: 164px; }
.menu label { display: flex; align-items: center; gap: 9px; height: 22px; }
.menu input { appearance: none; margin: 0; width: 22px; height: 22px; }
.menu input:checked { background: #91c9f7; display: grid; place-items: center; }
.menu input:checked::after { content: ""; width: 10px; height: 8px; background: #1e3a50; clip-path: polygon(0 50%, 10% 38%, 35% 72%, 90% 0, 100% 12%, 36% 100%); }
```
